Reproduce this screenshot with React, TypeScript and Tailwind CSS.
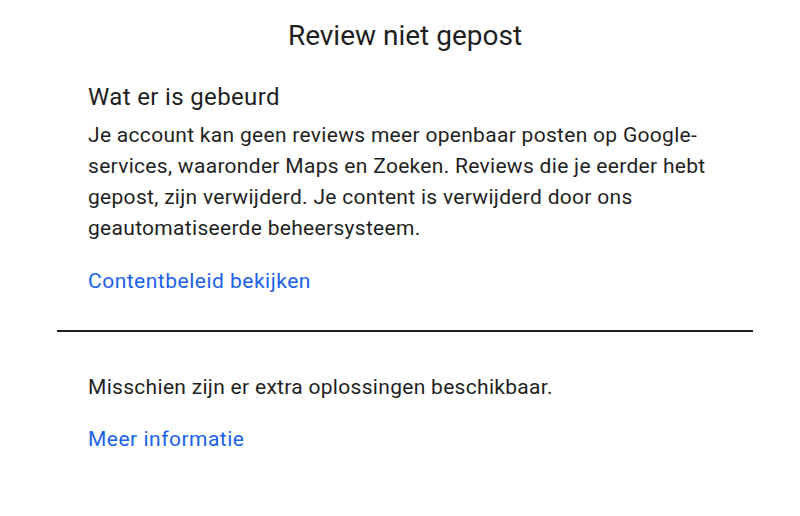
export default function App() {
  return (
    <div className="w-[800px] h-[516px] bg-white text-[#1f1f1f] font-['Roboto',sans-serif] overflow-hidden">
      <div className="pl-[57px] pr-[47px]">
        <h1 className="pt-[18px] text-center text-[28px] leading-[36px] font-normal">
          Review niet gepost
        </h1>
        <div className="px-[31px]">
          <h2 className="mt-[27px] text-[24px] leading-[32px] font-normal tracking-[0.35px]">
            Wat er is gebeurd
          </h2>
          <p className="mt-[7px] text-[21px] leading-[31px] tracking-[0.3px]">
            Je account kan geen reviews meer openbaar posten op Google-services, waaronder Maps en
            Zoeken. Reviews die je eerder hebt gepost, zijn verwijderd. Je content is verwijderd door
            ons geautomatiseerde beheersysteem.
          </p>
          <a className="block mt-[23px] text-[21px] leading-[28px] tracking-[0.5px] text-[#1a62e8]">
            Contentbeleid bekijken
          </a>
        </div>
        <div className="mt-[35px] h-[2px] bg-[#1f1f1f]" />
        <div className="px-[31px]">
          <p className="mt-[40px] text-[21px] leading-[30px] tracking-[0.3px]">
            Misschien zijn er extra oplossingen beschikbaar.
          </p>
          <a className="block mt-[23px] text-[21px] leading-[28px] tracking-[0.5px] text-[#1a62e8]">
            Meer informatie
          </a>
        </div>
      </div>
    </div>
  );
}
